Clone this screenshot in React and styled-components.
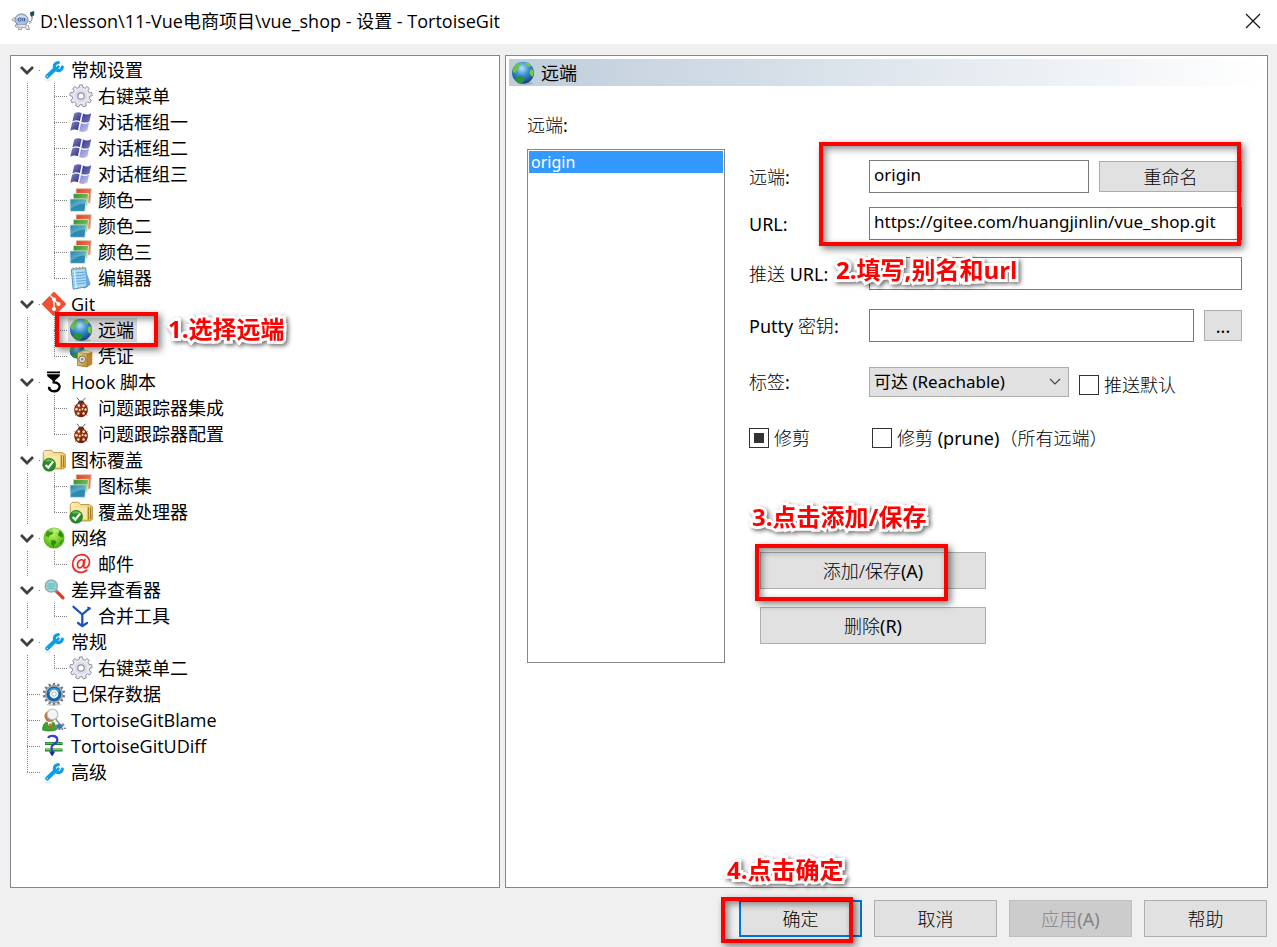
import React from "react";
import styled, { createGlobalStyle, css } from "styled-components";

const treeFont = `"Open Sans", "Noto Sans CJK SC", sans-serif`;
const formFont = `"Noto Sans", "Noto Sans CJK SC", sans-serif`;

const GlobalStyle = createGlobalStyle`
  *, *::before, *::after { box-sizing: border-box; }
  body { margin: 0; background: #f0f0f0; color: #000; font-family: ${formFont}; font-size: 18px; }
  button, input, select { font: inherit; color: inherit; }
  ul { list-style: none; margin: 0; padding: 0; }
`;

/* ---------- icons, all on a 24 unit square ---------- */

const Svg = styled.svg.attrs({ viewBox: "0 0 24 24", "aria-hidden": true })`
  display: block;
  flex: none;
  width: 24px;
  height: 24px;
`;

const Defs = styled.svg`
  position: absolute;
  width: 0;
  height: 0;
`;

const Shade = ({ id, from, to }) => (
  <linearGradient id={id} x1="0" y1="0" x2="1" y2="1">
    <stop offset="0" stopColor={from} />
    <stop offset="1" stopColor={to} />
  </linearGradient>
);

const IconShades = () => (
  <Defs aria-hidden="true">
    <defs>
      <Shade id="flagDark" from="#8687c8" to="#2b2c7c" />
      <Shade id="flagMid" from="#35368c" to="#7677bd" />
      <Shade id="flagLight" from="#7f80c6" to="#c9caf2" />
      <Shade id="cardRed" from="#d8401f" to="#f79a6c" />
      <Shade id="cardGreen" from="#2c8a2a" to="#a5de7a" />
      <Shade id="cardBlue" from="#2b86ac" to="#8ad0e4" />
      <Shade id="folder" from="#fdf3c0" to="#dfb548" />
      <Shade id="safe" from="#f5dd99" to="#b98731" />
      <radialGradient id="sea" cx=".45" cy=".3" r=".7">
        <stop offset="0" stopColor="#b4e2f6" />
        <stop offset=".45" stopColor="#3c93d0" />
        <stop offset="1" stopColor="#103f86" />
      </radialGradient>
      <radialGradient id="lime" cx=".45" cy=".35" r=".65">
        <stop offset="0" stopColor="#b8f65a" />
        <stop offset="1" stopColor="#45ad0a" />
      </radialGradient>
      <radialGradient id="shell" cx=".4" cy=".4" r=".65">
        <stop offset="0" stopColor="#b84a18" />
        <stop offset="1" stopColor="#6e1d02" />
      </radialGradient>
    </defs>
  </Defs>
);

const cog = (teeth, inner, outer) => {
  const points = [];
  const step = (Math.PI * 2) / teeth;
  for (let i = 0; i < teeth; i += 1) {
    const a = i * step - Math.PI / 2;
    [[-0.3, inner], [-0.2, outer], [0.2, outer], [0.3, inner]].forEach(([f, r]) => {
      points.push(`${(12 + Math.cos(a + f * step) * r).toFixed(2)} ${(12 + Math.sin(a + f * step) * r).toFixed(2)}`);
    });
  }
  return `M${points.join("L")}Z`;
};

const WrenchIcon = () => (
  <Svg>
    <ellipse cx="6" cy="21.800" rx="3.500" ry="1.600" fill="#dff3fd" />
    <path d="M5.200 18.400 13 11" stroke="#0a9fe8" strokeWidth="4.200" strokeLinecap="round" />
    <path d="M16.300 4.600a4 4 0 1 0 4 4.600" fill="none" stroke="#0a9fe8" strokeWidth="3.200" strokeLinecap="round" />
    <path d="m13.500 9.500 3-2.500 1.500 1.700-2.500 3z" fill="#0a9fe8" />
    <circle cx="5.300" cy="18.400" r=".7" fill="#bfe8fb" />
  </Svg>
);

const GearIcon = () => (
  <Svg>
    <path d={cog(9, 8.8, 11.2)} fill="#e8e8f1" stroke="#8f90a2" strokeWidth="1" strokeLinejoin="round" />
    <circle cx="12" cy="12" r="6.200" fill="#dcdce8" />
    <circle cx="12" cy="12" r="3.200" fill="#fff" stroke="#8f90a2" strokeWidth="1.200" />
  </Svg>
);

const WindowsIcon = () => (
  <Svg>
    <path d="M5.200 3.600Q8.800 1.200 12.600 3L10.900 11Q7.200 9.200 3.400 11.400Z" fill="url(#flagDark)" />
    <path d="M14 3.600Q18 5.500 22.200 3.200L20.400 11.400Q16.200 13.600 12.300 11.700Z" fill="url(#flagMid)" />
    <path d="M3.100 12.700Q6.800 10.600 10.600 12.300L8.900 20.200Q5.200 18.400 1.300 20.700Z" fill="url(#flagDark)" />
    <path d="M12 13Q15.900 14.900 20.100 12.700L18.300 20.800Q14.200 23 10.200 21Z" fill="url(#flagLight)" />
  </Svg>
);

const ColorsIcon = () => (
  <Svg>
    <path d="M7.300.8h14.900l-1.200 14H7z" fill="url(#cardRed)" stroke="#d9ada0" strokeWidth=".7" />
    <path d="M4.300 5.600h15.200l-1.300 12.600H4z" fill="url(#cardGreen)" stroke="#e4f2dc" strokeWidth=".8" />
    <path d="M1 11h16.300l-1.400 12.400H1.200z" fill="#2d8bb0" stroke="#d5ebf1" strokeWidth=".9" />
    <path d="M1.800 11.800h14.600l-.5 3.700Q8.500 15.500 2 20.500z" fill="url(#cardBlue)" />
  </Svg>
);

const NotepadIcon = () => (
  <Svg>
    <path d="m15 5 6.200 13.500-6 4.200z" fill="#3f7cbc" />
    <path d="M2.300 3.200 16.700 1.800l1.500 18.800-14 2.600z" fill="#a9d8f5" stroke="#4c86bd" strokeWidth=".9" />
    <path d="M16.800 4 21.500 17.500l-4.300 3.500z" fill="#68a6dc" />
    <path d="m4 7.200 12.200-1.100M4.200 10l12-1.100M4.500 12.800l12-1.100M4.800 15.600l12-1.300M5 18.400l11.600-1.600" stroke="#5a9fdb" strokeWidth=".9" />
    <path d="m5.500 5 1.600 17" stroke="#d8f2ff" strokeWidth="1.500" />
    <path d="m4 1.300.2 3M7.200 1l.2 3M10.400.7l.2 3M13.600.4l.2 3" stroke="#c7a546" strokeWidth="1.400" />
  </Svg>
);

const GitIcon = () => (
  <Svg>
    <path d="M10.900.5a1.600 1.600 0 0 1 2.200 0l10.400 10.400a1.600 1.600 0 0 1 0 2.200L13.100 23.500a1.600 1.600 0 0 1-2.200 0L.5 13.100a1.600 1.600 0 0 1 0-2.200z" fill="#f05133" />
    <path d="M8.300 3.500 12 7.200v9.600M12.300 8l4 4" stroke="#fff" strokeWidth="1.500" fill="none" />
    <circle cx="12" cy="7.500" r="2" fill="#fff" />
    <circle cx="16.500" cy="12.100" r="2" fill="#fff" />
    <circle cx="12" cy="17" r="2" fill="#fff" />
  </Svg>
);

const GlobeShape = () => (
  <>
    <circle cx="12" cy="11.800" r="11" fill="url(#sea)" />
    <path d="M1.500 9.500C2.600 5 5.500 2.300 8.500 1.500l.8 1.700-2.200 2.300.6 2-2.200 1.300-.4 2.200-2 1z" fill="#6cc13d" />
    <path d="M14 1.200c2.500.3 4.500 1.500 6 3.200l-1.300 1.500-3-1.200zM20 8.300l2.400.5c.6 2.800.2 5.300-1 7.200l-2-1.700-.8-3z" fill="#74cc44" />
    <path d="M5.500 16c2.700-1.300 6-1 8 1.200l-.5 3-2.500 2.100c-2.800-.3-5.300-1.900-6.700-4z" fill="#2b9531" />
  </>
);

const GlobeIcon = () => (
  <Svg>
    <ellipse cx="14" cy="22.300" rx="8" ry="1.500" fill="#8e9797" opacity=".6" />
    <GlobeShape />
  </Svg>
);

const CredentialIcon = () => (
  <Svg>
    <g transform="translate(0 -1) scale(.68)"><GlobeShape /></g>
    <path d="M8.500 8.300 18 6.300l5.300 1.500v12.400L18.500 23l-10-1.500z" fill="#b98731" />
    <path d="m8.500 8.300 9.800 1.200V23l-9.800-1.500z" fill="url(#safe)" stroke="#9f7626" strokeWidth=".7" />
    <path d="m8.500 8.300 9.500-2 5.300 1.500-5 1.700z" fill="#f6e3a3" />
    <circle cx="13.200" cy="15.300" r="3.400" fill="#dfe0db" stroke="#7d7258" strokeWidth="1" />
    <circle cx="13.200" cy="15.300" r="1.200" fill="#8a836e" />
  </Svg>
);

const HookIcon = () => (
  <Svg>
    <path d="M5 1.500h13v1.700H5zM5 4.200h13l-.4 2-4.700 4.300h-2.400L5.400 6.200z" fill="#000" />
    <path d="M11.700 9.500v2.800c5 .3 6.600 3 5.600 5.800-1.500 4.300-8.400 4.300-10.500-.2" fill="none" stroke="#000" strokeWidth="2.400" />
    <path d="m5.800 16.500 3.200.8-2.500 2z" fill="#000" />
  </Svg>
);

const BugIcon = () => (
  <Svg>
    <path d="m8 1.800 2.500 3M16.500 1.800 13.700 4.800M5.500 9.500 7 11M18.500 9.500 17 11M6 19.500l1.700-1.500M18 19.500 16.500 18" stroke="#333" strokeWidth=".8" />
    <path d="M8.800 7c0-3.500 6.500-3.500 6.500 0z" fill="#2d3436" />
    <ellipse cx="12" cy="13.700" rx="6.900" ry="7.500" fill="url(#shell)" />
    <path d="M12 7v13.500" stroke="#5d1b02" strokeWidth=".8" />
    <g fill="#fbe6da">
      <circle cx="9.800" cy="9.500" r="1.200" /><circle cx="14.600" cy="9.700" r="1.200" />
      <circle cx="7.400" cy="13.300" r="1.200" /><circle cx="16.600" cy="13.500" r="1.200" />
      <circle cx="10.800" cy="14" r="1" /><circle cx="13.500" cy="13" r=".9" />
      <circle cx="9.300" cy="17.500" r="1.200" /><circle cx="14.600" cy="17.500" r="1.200" />
    </g>
  </Svg>
);

const FolderIcon = () => (
  <Svg>
    <path d="M1.300 4.500 3 2.500l6.500-.3 2 2.300h8.600l3.300 2v13L20.800 21H3.500L1.300 18z" fill="url(#folder)" stroke="#ad8a30" strokeWidth=".8" />
    <path d="M2.500 8 18.500 7v12.500H4z" fill="#f8e8a6" />
    <path d="M19.300 7v12.800M21.600 7.500V19" stroke="#a97e1c" strokeWidth="1.200" />
    <circle cx="7.200" cy="16.800" r="6.500" fill="#278c28" stroke="#17641c" strokeWidth=".5" />
    <path d="M3 13c2-2.500 6-2.500 8 0-3 .2-5 1-8 0z" fill="#66be58" />
    <path d="m3.600 17 2.700 2.600 4.900-6.200" fill="none" stroke="#fff" strokeWidth="2.300" />
  </Svg>
);

const NetworkIcon = () => (
  <Svg>
    <circle cx="12" cy="12" r="10.500" fill="url(#lime)" />
    <path d="M4 7c2-3 4-4.200 6.500-4.500l-.5 2 2 1.500-1.800 2.500-2.800 1-.6 2-3-1.800z" fill="#3b9a10" />
    <path d="m16.300 3.500 3.700 3.300 1.400 4-2.800.3-2.700-2.200 1.400-2.300zM9.500 14l3.700.5 1.200 2.100-2 2.200-1 2.500-2.200-3.500zM19.300 14.500l1.500-.5-2.200 4-1.400.3z" fill="#2f8a0a" />
    <ellipse cx="12" cy="4.500" rx="6" ry="2.200" fill="#e0fbc0" opacity=".5" />
  </Svg>
);

const MailIcon = () => (
  <Svg fill="none" stroke="#f02424" strokeWidth="1.700" strokeLinecap="round">
    <path d="M15.900 7.500 14.800 13c-.5 3 1.200 3.300 2.900 2.500 3.300-2 4-7.500.7-10.700C14.700 1.500 8.500 2.200 5.500 6.300c-3 4.200-2.200 10.200 1.700 12.700 3.300 2.200 8 1.700 10.600-.8" />
    <path d="M14.800 9.300c-1-2.400-4.300-2-5.800 1-1.300 2.800-.4 5.700 1.800 5.500 2-.2 3.700-2.600 4-6.500z" />
  </Svg>
);

const LensIcon = () => (
  <Svg>
    <path d="m14 12.800 7 7" stroke="#e23a20" strokeWidth="3.200" strokeLinecap="round" />
    <path d="m12.800 11.500 2.500 2.500" stroke="#7e878a" strokeWidth="2" />
    <circle cx="9.300" cy="8" r="6" fill="#92dfdb" stroke="#a0a9ae" strokeWidth="1.600" />
    <path d="M5.500 6h7.500M5 8.200h8.500M5.800 10.300h7" stroke="#5aabb4" strokeWidth=".9" />
  </Svg>
);

const MergeIcon = () => (
  <Svg fill="none" stroke="#1b54b8" strokeWidth="2.300" strokeLinecap="round">
    <path d="m4.500 2.800 8.800 7.700M20.600 4.200l-7.300 6.300v11.300M9 19l4.300 3.200 4.700-3.200" />
    <path d="M19 3.400 21 5" strokeWidth="1.600" />
  </Svg>
);

const DataIcon = () => (
  <Svg>
    <ellipse cx="12" cy="22.600" rx="8" ry="1.200" fill="#d0d3d5" />
    <path d={cog(14, 9, 11.3)} fill="#737a7e" />
    <circle cx="12" cy="12" r="8.800" fill="#b4bbbf" />
    <circle cx="12" cy="12" r="6" fill="#f1f5f6" stroke="#1663a6" strokeWidth="3.200" />
    <path d="M7 10a5.500 5.500 0 0 1 10 0" fill="none" stroke="#4c9fd4" strokeWidth="1.600" />
    <circle cx="12" cy="12" r="2.200" fill="#fff" stroke="#9aa8ae" strokeWidth=".8" />
  </Svg>
);

const BlameIcon = () => (
  <Svg>
    <path d="M.6 22c0-5.500 2.200-8 5.500-8h3.300c3 0 4.500 2.500 4.500 8-3 1.400-10 1.400-13.300 0z" fill="#39a62d" stroke="#1c7119" strokeWidth=".6" />
    <path d="m5.500 14 2.500 7 2-7z" fill="#fff" />
    <path d="m7.400 15.300 1.300.2.500 4.500-1.200 1.500-1.200-2z" fill="#e84731" />
    <circle cx="8" cy="8.300" r="5.600" fill="#bd7b43" />
    <path d="m13.300 10.500 6.300 8" stroke="#8b979e" strokeWidth="1.700" />
    <circle cx="10.500" cy="6.400" r="5.400" fill="#f2f5f5" stroke="#b2b9b9" strokeWidth="1.100" />
    <ellipse cx="17.300" cy="18.500" rx="3.300" ry="2.400" fill="#47759e" />
    <circle cx="21" cy="16.800" r="1.500" fill="#7798ac" />
    <path d="m13.600 21.500 1.700-1M17.500 22v-1.200M21 21.500l-1.200-1" stroke="#65798a" strokeWidth="1.800" />
    <circle cx="23" cy="20.200" r=".8" fill="#2b4050" />
  </Svg>
);

const DiffIcon = () => (
  <Svg>
    <path d="M3 9.600h17.500M3 16h17.500" stroke="#188321" strokeWidth="3" />
    <path d="M3.500 9.200h16.500M3.500 15.600h16.500" stroke="#71d15e" strokeWidth="1.100" />
    <path d="M6.200 4C7.500 1 15.300 1 15.300 6c0 4.500-5.800 3.500-5.800 7.500 0 2.500 1 3 .8 5" fill="none" stroke="#3a42c4" strokeWidth="2.300" />
    <path d="m7 17.500 3.200 5 3-5z" fill="#202990" />
  </Svg>
);

const TurtleIcon = () => (
  <Svg>
    <path d="M6 14 4 17l1.500 1.500 3-2M8 17l-.5 3.500h3l1-3M14 17l1.500 3.500h3L17 16M3.500 12.500.8 11l2-2.300 3.700 2M18 14.500l2.500-1" fill="#eef1f4" stroke="#7f858c" strokeWidth=".8" />
    <ellipse cx="10.500" cy="10.800" rx="6.600" ry="5.900" fill="#a5c1ec" stroke="#6d7885" strokeWidth=".8" />
    <path d="M5.500 9q5-4 10 0" fill="none" stroke="#d5e3f8" strokeWidth="1.300" />
    <circle cx="8.600" cy="10.600" r="1.500" fill="none" stroke="#3f5590" strokeWidth="1" />
    <path d="M11.800 8.900v3.400M13.600 8.900v3.400" stroke="#3f5590" strokeWidth="1" />
    <path d="M17.500 12.500q3 .8 3.600-2.800M21 10V7" fill="none" stroke="#777f87" strokeWidth="1" />
    <path d="m19.300 3.500 3.500-1v3.800L20 7.300z" fill="#1b4b5b" stroke="#28373d" strokeWidth=".7" />
    <path d="M5 15.700h11l-2 2.700H8z" fill="#eceef0" stroke="#8a9097" strokeWidth=".7" />
  </Svg>
);

/* ---------- window frame ---------- */

const Window = styled.div`
  min-height: 100vh;
  display: flex;
  flex-direction: column;
`;

const TitleBar = styled.header`
  height: 44px;
  display: flex;
  align-items: center;
  gap: 5px;
  padding: 0 12px 2px 11px;
  background: #fff;
`;

const Title = styled.h1`
  flex: 1;
  margin: 0;
  font: 400 18px/24px ${treeFont};
`;

const CloseButton = styled.button`
  width: 24px;
  height: 24px;
  display: grid;
  place-items: center;
  padding: 0;
  border: 0;
  background: none;
`;

const Body = styled.main`
  flex: 1;
  display: grid;
  grid-template-columns: 490fr 763fr;
  gap: 5px;
  padding: 11px 9px 12px 10px;
`;

const Panel = styled.section`
  min-width: 0;
  border: 1px solid #828790;
  background: #fff;
`;

const TreePanel = styled(Panel)`
  padding: 1px 3px;
`;

const DetailPanel = styled(Panel)`
  padding: 3px 3px;
`;

/* ---------- annotations ---------- */

const Frame = styled.span`
  position: absolute;
  z-index: 1;
  inset: ${(p) => p.$inset};
  width: ${(p) => p.$width || "auto"};
  height: ${(p) => p.$height || "auto"};
  border: 4px solid #f00;
  box-shadow: 3px 3px 7px rgba(0, 0, 0, 0.5), inset 3px 3px 7px rgba(0, 0, 0, 0.45);
  pointer-events: none;
`;

const Note = styled.span`
  position: absolute;
  z-index: 2;
  left: ${(p) => p.$left};
  top: ${(p) => p.$top};
  white-space: nowrap;
  font: 700 24px/32px ${treeFont};
  color: #f00;
  -webkit-text-stroke: 6px #fff;
  paint-order: stroke fill;
  filter: drop-shadow(2px 2px 2px rgba(0, 0, 0, 0.55));
  pointer-events: none;
`;

/* ---------- tree ---------- */

const Row = styled.li`
  position: relative;
  display: flex;
  height: 26px;
  align-items: center;
  font: 400 18px/26px ${treeFont};
`;

const across = "repeating-linear-gradient(to right, #808080 0 1px, transparent 1px 2px)";
const down = "repeating-linear-gradient(to bottom, #808080 0 1px, transparent 1px 2px)";

const guides = {
  line: css`background: ${down} 13px 0 / 1px 26px no-repeat;`,
  tee: css`background: ${down} 13px 0 / 1px 26px no-repeat, ${across} 13px 13px / 14px 1px no-repeat;`,
  end: css`background: ${down} 13px 0 / 1px 13px no-repeat, ${across} 13px 13px / 14px 1px no-repeat;`,
  toggle: css`background: ${across} 25px 13px / 2px 1px no-repeat;`,
};

const Cell = styled.span`
  flex: none;
  width: 27px;
  height: 26px;
  display: grid;
  place-items: center;
  padding-right: 1px;
  ${(p) => guides[p.$guide]}
`;

const Item = styled.span`
  display: flex;
  align-items: center;
  height: 24px;
  background: ${(p) => (p.$selected ? "#d9d9d9" : "none")};
`;

const Label = styled.span`
  padding: 0 3px;
  white-space: nowrap;
`;

const Chevron = () => (
  <svg width="14" height="10" viewBox="0 0 14 10" fill="none" stroke="#404040" strokeWidth="2.800" aria-hidden="true">
    <path d="m1 2 6 6 6-6" />
  </svg>
);

const tree = [
  { name: "常规设置", icon: WrenchIcon, children: [
    ["右键菜单", GearIcon], ["对话框组一", WindowsIcon], ["对话框组二", WindowsIcon], ["对话框组三", WindowsIcon],
    ["颜色一", ColorsIcon], ["颜色二", ColorsIcon], ["颜色三", ColorsIcon], ["编辑器", NotepadIcon],
  ] },
  { name: "Git", icon: GitIcon, children: [["远端", GlobeIcon, true], ["凭证", CredentialIcon]] },
  { name: "Hook 脚本", icon: HookIcon, children: [["问题跟踪器集成", BugIcon], ["问题跟踪器配置", BugIcon]] },
  { name: "图标覆盖", icon: FolderIcon, children: [["图标集", ColorsIcon], ["覆盖处理器", FolderIcon]] },
  { name: "网络", icon: NetworkIcon, children: [["邮件", MailIcon]] },
  { name: "差异查看器", icon: LensIcon, children: [["合并工具", MergeIcon]] },
  { name: "常规", icon: WrenchIcon, children: [["右键菜单二", GearIcon]] },
  { name: "已保存数据", icon: DataIcon },
  { name: "TortoiseGitBlame", icon: BlameIcon },
  { name: "TortoiseGitUDiff", icon: DiffIcon },
  { name: "高级", icon: WrenchIcon },
];

function Tree() {
  return (
    <ul>
      {tree.map(({ name, icon: Icon, children }, i) => {
        const rootGuide = children ? "toggle" : i === tree.length - 1 ? "end" : "tee";
        return (
          <React.Fragment key={name}>
            <Row>
              <Cell $guide={rootGuide}>{children && <Chevron />}</Cell>
              <Item><Cell><Icon /></Cell><Label>{name}</Label></Item>
            </Row>
            {children?.map(([child, ChildIcon, selected], j) => (
              <Row key={child}>
                <Cell $guide="line" />
                <Cell $guide={j === children.length - 1 ? "end" : "tee"} />
                <Item $selected={selected}><Cell><ChildIcon /></Cell><Label>{child}</Label></Item>
                {selected && (
                  <>
                    <Frame $inset="-5px auto -4px 41px" $width="103px" />
                    <Note $left="154px" $top="-4px">1.选择远端</Note>
                  </>
                )}
              </Row>
            ))}
          </React.Fragment>
        );
      })}
    </ul>
  );
}

/* ---------- details ---------- */

const PageHeader = styled.h2`
  display: flex;
  align-items: center;
  gap: 6px;
  height: 27px;
  margin: 0;
  padding: 0 2px;
  background: linear-gradient(to right, #bfcddb, #fff);
  font: 400 18px/28px ${treeFont};
`;

const Columns = styled.div`
  display: flex;
  gap: 24px;
  padding: 26px 22px 0 18px;
  font-weight: 300;
`;

const Latin = styled.span`
  font-weight: 400;
  white-space: pre;
`;

const RemoteColumn = styled.div`
  flex: none;
  width: 198px;
`;

const ListTitle = styled.div`
  height: 37px;
  line-height: 26px;
`;

const ListBox = styled.ul`
  height: 514px;
  padding: 1px;
  border: 1px solid #828790;
`;

const ListItem = styled.li`
  height: 22px;
  padding: 0 2px;
  background: #3399ff;
  color: #fff;
  font-size: 16px;
  font-weight: 400;
  line-height: 22px;
`;

const Form = styled.form`
  position: relative;
  flex: 1;
  min-width: 0;
  padding-top: 48px;
`;

const FormRow = styled.div`
  display: flex;
  align-items: center;
  gap: 10px;
  height: 33px;
  margin-bottom: ${(p) => p.$space}px;
`;

const FieldLabel = styled.label`
  flex: none;
  width: 110px;
  line-height: 24px;
  white-space: nowrap;
`;

const TextBox = styled.input`
  flex: 1;
  min-width: 0;
  height: 33px;
  padding: 0 4px 4px;
  border: 1px solid #7a7a7a;
  border-radius: 0;
  background: #fff;
  font-size: 17px;
  font-weight: 400;
  outline: 0;
`;

const Button = styled.button`
  flex: none;
  width: ${(p) => p.$width}px;
  height: ${(p) => p.$height || 37}px;
  padding: 0;
  border: ${(p) => (p.$primary ? "2px solid #0078d7" : "1px solid #adadad")};
  border-radius: 0;
  background: #e1e1e1;
  font-weight: 300;
  line-height: 24px;
  &:disabled {
    border-color: #bfbfbf;
    background: #ccc;
    color: #838383;
  }
`;

const SelectWrap = styled.span`
  position: relative;
  flex: none;
  width: 200px;
  height: 30px;
  svg { position: absolute; right: 8px; top: 10px; pointer-events: none; }
`;

const Select = styled.select`
  appearance: none;
  width: 100%;
  height: 30px;
  padding: 0 4px;
  border: 1px solid #adadad;
  border-radius: 0;
  background: #e1e1e1;
  font-size: 17px;
  font-weight: 400;
`;

const Check = styled.label`
  display: flex;
  align-items: center;
  gap: 5px;
  width: ${(p) => p.$width || "auto"};
  padding-top: ${(p) => p.$drop || 0}px;
  line-height: 24px;
  white-space: nowrap;
`;

const CheckBox = styled.input.attrs({ type: "checkbox" })`
  appearance: none;
  flex: none;
  width: 20px;
  height: 20px;
  margin: 0;
  padding: 4px;
  border: 1px solid #333;
  background: #fff;
  &:checked { background: linear-gradient(#333, #333) content-box no-repeat, #fff; }
`;

const Actions = styled.div`
  position: relative;
  display: flex;
  flex-direction: column;
  gap: 18px;
  width: 226px;
  margin: 98px 0 0 11px;
`;

const Footer = styled.footer`
  display: flex;
  justify-content: flex-end;
  gap: 12px;
  padding: 0 10px 10px;
`;

const Anchor = styled.span`
  position: relative;
`;

export default function App() {
  return (
    <Window>
      <GlobalStyle />
      <IconShades />
      <TitleBar>
        <TurtleIcon />
        <Title>D:\lesson\11-Vue电商项目\vue_shop - 设置 - TortoiseGit</Title>
        <CloseButton aria-label="关闭">
          <svg width="16" height="16" viewBox="0 0 16 16" stroke="#111" strokeWidth="1.200"><path d="m1 1 14 14M15 1 1 15" /></svg>
        </CloseButton>
      </TitleBar>
      <Body>
        <TreePanel><Tree /></TreePanel>
        <DetailPanel>
          <PageHeader><GlobeIcon />远端</PageHeader>
          <Columns>
            <RemoteColumn>
              <ListTitle id="remotes">远端<Latin>:</Latin></ListTitle>
              <ListBox role="listbox" aria-labelledby="remotes">
                <ListItem role="option" aria-selected="true">origin</ListItem>
              </ListBox>
            </RemoteColumn>
            <Form onSubmit={(e) => e.preventDefault()}>
              <FormRow $space={14}>
                <FieldLabel htmlFor="name">远端<Latin>:</Latin></FieldLabel>
                <TextBox id="name" defaultValue="origin" />
                <Button type="button" $width={143} $height={31}>重命名</Button>
              </FormRow>
              <FormRow $space={17}>
                <FieldLabel htmlFor="url"><Latin>URL:</Latin></FieldLabel>
                <TextBox id="url" defaultValue="https://gitee.com/huangjinlin/vue_shop.git" />
              </FormRow>
              <FormRow $space={19}>
                <FieldLabel htmlFor="push">推送<Latin> URL:</Latin></FieldLabel>
                <TextBox id="push" />
              </FormRow>
              <FormRow $space={23}>
                <FieldLabel htmlFor="key"><Latin>Putty </Latin>密钥<Latin>:</Latin></FieldLabel>
                <TextBox id="key" />
                <Button type="button" $width={38} $height={31}><Latin>...</Latin></Button>
              </FormRow>
              <FormRow $space={23}>
                <FieldLabel htmlFor="tags">标签<Latin>:</Latin></FieldLabel>
                <SelectWrap>
                  <Select id="tags"><option>可达 (Reachable)</option></Select>
                  <svg width="12" height="10" viewBox="0 0 12 10" fill="none" stroke="#444" strokeWidth="1.200"><path d="m1 2 5 5 5-5" /></svg>
                </SelectWrap>
                <Check $drop={7}><CheckBox />推送默认</Check>
              </FormRow>
              <FormRow $space={0}>
                <Check $width="113px"><CheckBox defaultChecked />修剪</Check>
                <Check><CheckBox /><span>修剪<Latin> (prune)</Latin>（所有远端）</span></Check>
              </FormRow>
              <Actions>
                <Button type="button" $width={226}>添加/保存<Latin>(A)</Latin></Button>
                <Button type="button" $width={226}>删除<Latin>(R)</Latin></Button>
                <Frame $inset="-8px 38px 43px -5px" />
                <Note $left="-8px" $top="-51px">3.点击添加/保存</Note>
              </Actions>
              <Frame $inset="30px 1px auto 70px" $height="104px" />
              <Note $left="87px" $top="142px">2.填写,别名和url</Note>
            </Form>
          </Columns>
        </DetailPanel>
      </Body>
      <Footer>
        <Anchor>
          <Button $width={123} $primary>确定</Button>
          <Frame $inset="-3px 9px -6px -18px" />
          <Note $left="-12px" $top="-46px">4.点击确定</Note>
        </Anchor>
        <Button $width={123}>取消</Button>
        <Button $width={123} disabled>应用<Latin>(A)</Latin></Button>
        <Button $width={123}>帮助</Button>
      </Footer>
    </Window>
  );
}
